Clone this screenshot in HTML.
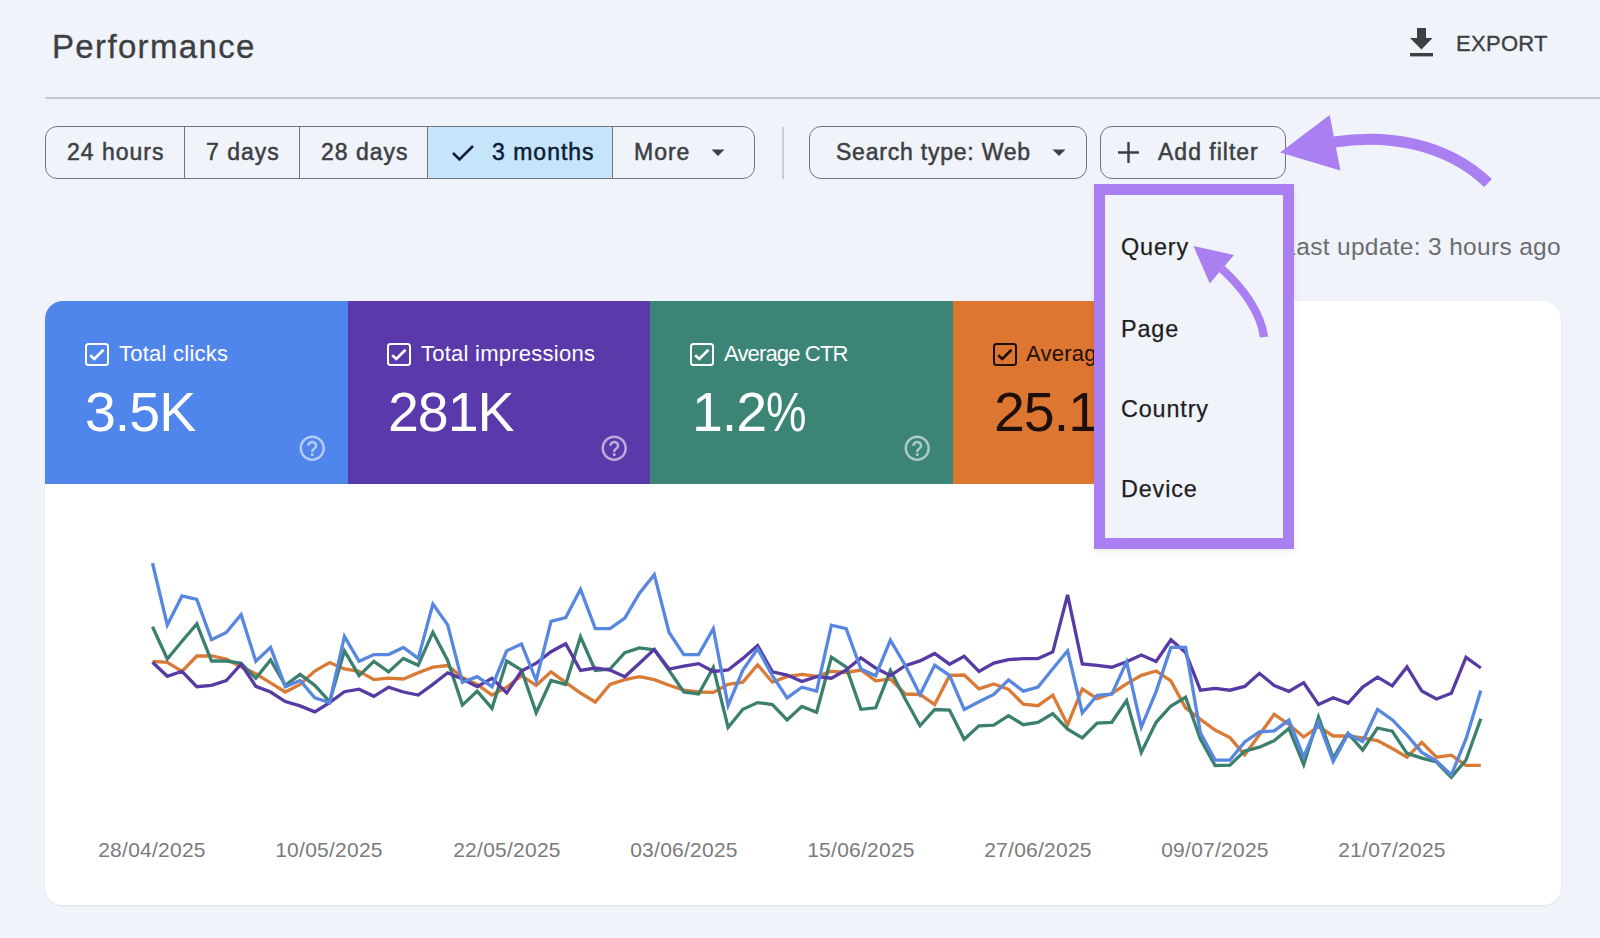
<!DOCTYPE html>
<html><head><meta charset="utf-8">
<style>
*{margin:0;padding:0;box-sizing:border-box}
html,body{width:1600px;height:938px;overflow:hidden;background:#f0f3f9;font-family:"Liberation Sans",sans-serif;position:relative}
.abs{position:absolute}
.t{position:absolute;white-space:nowrap;line-height:1}
#title{left:52px;top:30px;font-size:33px;color:#3c4043;letter-spacing:1.35px;-webkit-text-stroke:0.3px #3c4043}
#divider{left:45px;top:97px;width:1555px;height:2px;background:#c5c8cc}
#export-ico{left:1409px;top:28px}
#export{left:1456px;top:33px;font-size:22px;color:#3c4043;letter-spacing:0.3px;-webkit-text-stroke:0.35px #3c4043}
.grp{position:absolute;left:45px;top:126px;width:710px;height:53px;border:1.5px solid #70757a;border-radius:12px;overflow:hidden}
.seg{position:absolute;top:0;height:100%;border-left:1.5px solid #70757a}
.btn{position:absolute;top:126px;height:53px;border:1.5px solid #70757a;border-radius:12px}
.bt{position:absolute;white-space:nowrap;line-height:1;font-size:23px;color:#3c4043;top:141px;letter-spacing:1px;-webkit-text-stroke:0.5px currentColor}
#vsep{left:782px;top:127px;width:1.5px;height:52px;background:#c9ccd0}
#lastupd{right:39px;top:234.5px;font-size:24.5px;color:#6a6d71;letter-spacing:0.32px}
#card{left:45px;top:301px;width:1516px;height:604px;background:#fff;border-radius:18px 19px 17px 17px;box-shadow:0 1px 2px rgba(60,64,67,.10)}
.mc{position:absolute;top:301px;height:183px}
.cb{position:absolute;top:343px;width:24px;height:23px;border:2.6px solid #fff;border-radius:3.5px}
.ml{position:absolute;top:343px;font-size:22px;color:#fff;white-space:nowrap;line-height:1;letter-spacing:0.25px}
.mv{position:absolute;top:385px;font-size:55.5px;color:#fff;white-space:nowrap;line-height:1;letter-spacing:-1px}
.help{position:absolute;top:436px;width:25px;height:25px;border:2.2px solid rgba(255,255,255,.5);border-radius:50%}
.help span{position:absolute;left:0;right:0;top:2px;text-align:center;font-size:17px;font-weight:bold;color:rgba(255,255,255,.5);line-height:1}
.dl{position:absolute;top:839px;font-size:21px;color:#7b7b7b;letter-spacing:0.25px;white-space:nowrap;line-height:1;width:160px;text-align:center}
#menu{left:1094px;top:184px;width:200px;height:365px;border:11px solid #a97ff2;background:#f0f3f9;box-shadow:0 3px 6px rgba(60,64,67,.10)}
.mi{position:absolute;left:1121px;font-size:23.4px;color:#1f1f1f;white-space:nowrap;line-height:1;letter-spacing:0.85px;-webkit-text-stroke:0.25px #1f1f1f}
</style></head><body>
<div class="t" id="title">Performance</div>
<div class="abs" id="divider"></div>
<svg class="abs" id="export-ico" width="26" height="30" viewBox="0 0 26 30"><path d="M8 0h9v10h6.5L12.5 21.5 1 10h7z" fill="#3c4043"/><rect x="1" y="25" width="23" height="3.4" fill="#3c4043"/></svg>
<div class="t" id="export">EXPORT</div>

<div class="grp">
  <div class="abs" style="left:381px;top:0;width:185px;height:100%;background:#c6e5fb"></div>
  <div class="seg" style="left:138px"></div>
  <div class="seg" style="left:253px"></div>
  <div class="seg" style="left:381px"></div>
  <div class="seg" style="left:566px"></div>
</div>
<div class="bt" style="left:67px">24 hours</div>
<div class="bt" style="left:206px">7 days</div>
<div class="bt" style="left:321px">28 days</div>
<svg class="abs" style="left:451px;top:144px" width="24" height="18" viewBox="0 0 24 18"><path d="M2 9l6.5 6.5L22 2" fill="none" stroke="#0b1d35" stroke-width="2.6"/></svg>
<div class="bt" style="left:492px;color:#0b1d35">3 months</div>
<div class="bt" style="left:634px">More</div>
<svg class="abs" style="left:711px;top:149px" width="14" height="8" viewBox="0 0 14 8"><path d="M0.5 0.5h13L7 7z" fill="#3c4043"/></svg>
<div class="abs" id="vsep"></div>
<div class="btn" style="left:809px;width:278px"></div>
<div class="bt" style="left:836px;letter-spacing:0.78px">Search type: Web</div>
<svg class="abs" style="left:1052px;top:149px" width="14" height="8" viewBox="0 0 14 8"><path d="M0.5 0.5h13L7 7z" fill="#3c4043"/></svg>
<div class="btn" style="left:1100px;width:186px"></div>
<svg class="abs" style="left:1117px;top:141px" width="23" height="23" viewBox="0 0 23 23"><path d="M11.5 1v21M1 11.5h21" stroke="#3c4043" stroke-width="2.4"/></svg>
<div class="bt" style="left:1158px">Add filter</div>

<div class="t" id="lastupd">Last update: 3 hours ago</div>

<div class="abs" id="card"></div>
<div class="mc" style="left:45px;width:303px;background:#5086ec;border-top-left-radius:18px"></div>
<div class="mc" style="left:348px;width:302px;background:#5a39aa"></div>
<div class="mc" style="left:650px;width:303px;background:#3b8476"></div>
<div class="mc" style="left:953px;width:303px;background:#dd7631"></div>

<div class="cb" style="left:85px"></div>
<svg class="abs" style="left:89px;top:348px" width="16" height="14" viewBox="0 0 16 14"><path d="M1.2 7.2L5.3 11L14.5 1.8" fill="none" stroke="#fff" stroke-width="2.7"/></svg>
<div class="ml" style="left:119px">Total clicks</div>
<div class="mv" style="left:85px">3.5K</div>
<svg class="abs" style="left:296.6px;top:433.2px" width="30.5" height="30.5" viewBox="0 0 24 24"><path fill="rgba(255,255,255,.58)" d="M11 18h2v-2h-2v2zm1-16C6.48 2 2 6.48 2 12s4.48 10 10 10 10-4.48 10-10S17.52 2 12 2zm0 18c-4.41 0-8-3.59-8-8s3.59-8 8-8 8 3.59 8 8-3.59 8-8 8zm0-14c-2.21 0-4 1.79-4 4h2c0-1.1.9-2 2-2s2 .9 2 2c0 2-3 1.75-3 5h2c0-2.25 3-2.5 3-5 0-2.21-1.79-4-4-4z"/></svg>

<div class="cb" style="left:387px"></div>
<svg class="abs" style="left:391px;top:348px" width="16" height="14" viewBox="0 0 16 14"><path d="M1.2 7.2L5.3 11L14.5 1.8" fill="none" stroke="#fff" stroke-width="2.7"/></svg>
<div class="ml" style="left:421px">Total impressions</div>
<div class="mv" style="left:388px">281K</div>
<svg class="abs" style="left:599.4px;top:433.2px" width="30.5" height="30.5" viewBox="0 0 24 24"><path fill="rgba(255,255,255,.58)" d="M11 18h2v-2h-2v2zm1-16C6.48 2 2 6.48 2 12s4.48 10 10 10 10-4.48 10-10S17.52 2 12 2zm0 18c-4.41 0-8-3.59-8-8s3.59-8 8-8 8 3.59 8 8-3.59 8-8 8zm0-14c-2.21 0-4 1.79-4 4h2c0-1.1.9-2 2-2s2 .9 2 2c0 2-3 1.75-3 5h2c0-2.25 3-2.5 3-5 0-2.21-1.79-4-4-4z"/></svg>

<div class="cb" style="left:690px"></div>
<svg class="abs" style="left:694px;top:348px" width="16" height="14" viewBox="0 0 16 14"><path d="M1.2 7.2L5.3 11L14.5 1.8" fill="none" stroke="#fff" stroke-width="2.7"/></svg>
<div class="ml" style="left:724px;letter-spacing:-0.85px">Average CTR</div>
<div class="mv" style="left:692px;letter-spacing:-1px">1.2<span style="display:inline-block;transform:scaleX(0.82);transform-origin:0 0">%</span></div>
<svg class="abs" style="left:902.0px;top:433.2px" width="30.5" height="30.5" viewBox="0 0 24 24"><path fill="rgba(255,255,255,.58)" d="M11 18h2v-2h-2v2zm1-16C6.48 2 2 6.48 2 12s4.48 10 10 10 10-4.48 10-10S17.52 2 12 2zm0 18c-4.41 0-8-3.59-8-8s3.59-8 8-8 8 3.59 8 8-3.59 8-8 8zm0-14c-2.21 0-4 1.79-4 4h2c0-1.1.9-2 2-2s2 .9 2 2c0 2-3 1.75-3 5h2c0-2.25 3-2.5 3-5 0-2.21-1.79-4-4-4z"/></svg>

<div class="cb" style="left:993px;border-color:#1e0f08"></div>
<svg class="abs" style="left:997px;top:348px" width="16" height="14" viewBox="0 0 16 14"><path d="M1.2 7.2L5.3 11L14.5 1.8" fill="none" stroke="#1e0f08" stroke-width="2.7"/></svg>
<div class="ml" style="left:1026px;color:#1e0f08">Average position</div>
<div class="mv" style="left:994px;color:#1e0f08">25.1</div>

<svg class="abs" style="left:0;top:0" width="1600" height="938" viewBox="0 0 1600 938">
<g fill="none" stroke-width="3.3" stroke-linejoin="miter" stroke-linecap="butt">
<polyline points="152.5,661.3 167.3,662.3 182.0,671.3 196.8,656.0 211.5,656.0 226.3,659.0 241.1,667.0 255.8,673.8 270.6,682.8 285.3,692.0 300.1,684.4 314.8,671.0 329.6,662.5 344.4,669.0 359.1,671.3 373.9,679.6 388.6,678.2 403.4,679.0 418.2,672.8 432.9,667.1 447.7,665.5 462.4,677.6 477.2,684.4 492.0,695.0 506.7,687.2 521.5,675.7 536.2,685.3 551.0,671.9 565.7,682.4 580.5,693.0 595.3,702.0 610.0,684.4 624.8,679.6 639.5,676.7 654.3,679.6 669.1,685.3 683.8,690.1 698.6,692.0 713.3,692.4 728.1,684.4 742.9,682.1 757.6,664.8 772.4,682.1 787.1,676.7 801.9,674.4 816.6,676.3 831.4,671.3 846.2,672.5 860.9,670.0 875.7,680.9 890.4,679.0 905.2,694.0 920.0,694.5 934.7,704.5 949.5,675.4 964.2,675.0 979.0,688.9 993.8,683.9 1008.5,689.3 1023.3,704.1 1038.0,705.7 1052.8,695.1 1067.6,724.7 1082.3,688.9 1097.1,698.7 1111.8,693.5 1126.6,683.9 1141.3,675.3 1156.1,671.0 1170.9,681.0 1185.6,707.9 1200.4,719.4 1215.1,730.0 1229.9,737.6 1244.7,754.9 1259.4,734.8 1274.2,714.3 1288.9,724.5 1303.7,737.0 1318.5,726.5 1333.2,736.0 1348.0,736.0 1362.7,738.0 1377.5,740.5 1392.2,748.5 1407.0,757.2 1421.8,742.4 1436.5,757.2 1451.3,755.2 1466.0,765.4 1480.8,765.4" stroke="#d97a36"/>
<polyline points="152.5,626.8 167.3,659.0 182.0,641.2 196.8,623.9 211.5,661.0 226.3,661.0 241.1,663.2 255.8,678.2 270.6,660.0 285.3,685.3 300.1,674.4 314.8,685.3 329.6,701.6 344.4,650.8 359.1,675.7 373.9,661.3 388.6,671.9 403.4,658.4 418.2,665.2 432.9,632.2 447.7,660.4 462.4,705.1 477.2,691.1 492.0,708.3 506.7,661.0 521.5,670.0 536.2,712.8 551.0,680.5 565.7,684.4 580.5,636.8 595.3,670.5 610.0,669.0 624.8,652.7 639.5,647.9 654.3,649.8 669.1,670.5 683.8,692.0 698.6,694.0 713.3,667.5 728.1,727.5 742.9,709.3 757.6,702.6 772.4,704.5 787.1,719.9 801.9,706.4 816.6,712.2 831.4,657.1 846.2,667.1 860.9,709.3 875.7,707.8 890.4,670.5 905.2,699.0 920.0,725.8 934.7,709.5 949.5,710.1 964.2,739.2 979.0,725.8 993.8,725.1 1008.5,715.7 1023.3,724.7 1038.0,722.5 1052.8,713.5 1067.6,729.2 1082.3,738.0 1097.1,723.2 1111.8,722.3 1126.6,700.6 1141.3,752.4 1156.1,722.3 1170.9,706.0 1185.6,697.3 1200.4,739.0 1215.1,765.5 1229.9,765.1 1244.7,751.1 1259.4,747.2 1274.2,740.7 1288.9,728.4 1303.7,764.6 1318.5,717.0 1333.2,758.0 1348.0,733.3 1362.7,750.0 1377.5,728.0 1392.2,731.2 1407.0,753.3 1421.8,758.1 1436.5,762.0 1451.3,777.3 1466.0,760.0 1480.8,718.8" stroke="#3b7f6e"/>
<polyline points="152.5,662.3 167.3,676.3 182.0,671.3 196.8,686.7 211.5,685.3 226.3,680.5 241.1,664.2 255.8,686.3 270.6,692.0 285.3,701.6 300.1,705.9 314.8,711.8 329.6,702.6 344.4,691.7 359.1,689.2 373.9,696.3 388.6,687.2 403.4,692.0 418.2,695.0 432.9,684.4 447.7,672.8 462.4,679.0 477.2,686.7 492.0,678.2 506.7,693.0 521.5,671.0 536.2,663.2 551.0,651.7 565.7,643.7 580.5,670.5 595.3,668.0 610.0,670.0 624.8,676.7 639.5,663.2 654.3,649.4 669.1,669.0 683.8,666.1 698.6,663.6 713.3,671.5 728.1,670.0 742.9,658.4 757.6,645.6 772.4,671.9 787.1,675.1 801.9,681.5 816.6,676.7 831.4,678.2 846.2,670.0 860.9,657.9 875.7,668.0 890.4,675.7 905.2,665.7 920.0,660.9 934.7,653.5 949.5,664.2 964.2,656.4 979.0,671.4 993.8,663.1 1008.5,659.7 1023.3,658.6 1038.0,658.6 1052.8,651.9 1067.6,594.8 1082.3,664.0 1097.1,665.3 1111.8,667.2 1126.6,661.8 1141.3,655.1 1156.1,661.4 1170.9,639.8 1185.6,652.6 1200.4,690.2 1215.1,688.3 1229.9,690.2 1244.7,686.4 1259.4,673.3 1274.2,685.5 1288.9,691.4 1303.7,682.7 1318.5,704.4 1333.2,697.7 1348.0,703.4 1362.7,687.1 1377.5,677.2 1392.2,685.8 1407.0,667.0 1421.8,691.0 1436.5,699.0 1451.3,693.3 1466.0,657.4 1480.8,668.0" stroke="#573aa3"/>
<polyline points="152.5,563.1 167.3,624.9 182.0,596.0 196.8,599.5 211.5,639.8 226.3,632.5 241.1,614.7 255.8,661.3 270.6,647.3 285.3,686.7 300.1,680.5 314.8,697.8 329.6,702.6 344.4,636.4 359.1,661.3 373.9,654.6 388.6,654.6 403.4,647.5 418.2,658.4 432.9,604.1 447.7,624.9 462.4,682.4 477.2,676.7 492.0,686.7 506.7,650.8 521.5,644.0 536.2,680.5 551.0,621.4 565.7,617.6 580.5,589.3 595.3,628.7 610.0,628.7 624.8,618.1 639.5,593.2 654.3,574.6 669.1,632.5 683.8,654.6 698.6,654.6 713.3,628.7 728.1,705.5 742.9,670.0 757.6,648.8 772.4,675.7 787.1,697.8 801.9,687.2 816.6,691.1 831.4,625.2 846.2,628.7 860.9,669.0 875.7,675.7 890.4,640.2 905.2,665.2 920.0,694.5 934.7,665.3 949.5,675.4 964.2,709.5 979.0,701.8 993.8,694.5 1008.5,679.9 1023.3,691.1 1038.0,687.1 1052.8,668.7 1067.6,650.8 1082.3,713.0 1097.1,695.4 1111.8,694.1 1126.6,661.8 1141.3,727.1 1156.1,691.6 1170.9,647.4 1185.6,647.4 1200.4,732.8 1215.1,760.1 1229.9,760.1 1244.7,742.0 1259.4,731.9 1274.2,730.9 1288.9,720.1 1303.7,757.0 1318.5,722.0 1333.2,761.5 1348.0,734.0 1362.7,741.5 1377.5,709.5 1392.2,719.7 1407.0,735.1 1421.8,752.4 1436.5,761.0 1451.3,775.0 1466.0,738.9 1480.8,690.6" stroke="#5887e0"/>
</g>
</svg>

<div class="dl" style="left:72px">28/04/2025</div>
<div class="dl" style="left:249px">10/05/2025</div>
<div class="dl" style="left:427px">22/05/2025</div>
<div class="dl" style="left:604px">03/06/2025</div>
<div class="dl" style="left:781px">15/06/2025</div>
<div class="dl" style="left:958px">27/06/2025</div>
<div class="dl" style="left:1135px">09/07/2025</div>
<div class="dl" style="left:1312px">21/07/2025</div>

<div class="abs" id="menu"></div>
<div class="mi" style="top:236px">Query</div>
<div class="mi" style="top:317.5px">Page</div>
<div class="mi" style="top:397.5px">Country</div>
<div class="mi" style="top:477.5px">Device</div>

<svg class="abs" style="left:0;top:0" width="1600" height="938" viewBox="0 0 1600 938">
<g fill="#a97ff2">
<path d="M1334 142 C1385 134 1445 142 1488 183" fill="none" stroke="#a97ff2" stroke-width="11"/>
<polygon points="1280,152.4 1329.7,115.1 1340.4,170.4"/>
<path d="M1222 269 C1243 288 1261 313 1264 337" fill="none" stroke="#a97ff2" stroke-width="8.3"/>
<polygon points="1193.5,246 1234,255 1209.7,283.5"/>
</g>
</svg>
</body></html>
